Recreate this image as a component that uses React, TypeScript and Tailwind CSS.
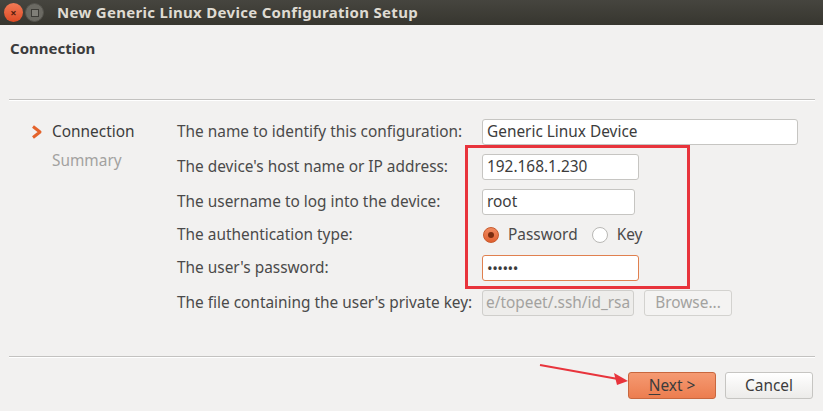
import { ReactNode } from "react";

function Field({ value, width, className = "" }: { value: string; width: string; className?: string }) {
  return (
    <div
      className={`h-[26px] ${width} flex items-center px-[4px] rounded-[3px] border bg-white text-[#3c3c3c] ${className}`}
    >
      {value}
    </div>
  );
}

function Row({ label, children, h = "h-[26px]" }: { label: string; children: ReactNode; h?: string }) {
  return (
    <>
      <div className={`${h} flex items-center`}>{label}</div>
      <div className={`${h} flex items-center`}>{children}</div>
    </>
  );
}

export default function App() {
  return (
    <div
      className="w-[823px] h-[411px] bg-[#f2f1f0] flex flex-col overflow-hidden text-[#4a4a4a] text-[15.4px]"
      style={{ fontFamily: '"Noto Sans", "DejaVu Sans", sans-serif' }}
    >
      {/* Title bar */}
      <div className="h-[25px] bg-gradient-to-b from-[#46453f] to-[#37362f] flex items-center shrink-0">
        <div className="ml-[4px] w-[19px] h-[19px] rounded-full bg-gradient-to-b from-[#f27a55] to-[#de4a23] flex items-center justify-center text-[#5a2010] text-[11px] font-bold leading-none">
          ×
        </div>
        <div className="ml-[2px] w-[19px] h-[19px] rounded-full bg-[#6b6a63] border border-[#55544e] flex items-center justify-center">
          <div className="w-[8px] h-[8px] border border-[#3d3c37] bg-[#807f78]" />
        </div>
        <div className="ml-[13px] text-[#dfdbd2] font-bold text-[15px] tracking-[0.3px]">
          New Generic Linux Device Configuration Setup
        </div>
      </div>

      {/* Header */}
      <div className="h-[74px] shrink-0 px-[10px] pt-[12px] font-bold text-[#3c3c3c] text-[15px]">Connection</div>
      <div className="mx-[9px] mr-[8px] border-t border-[#c3c2c0] border-b border-b-white" />

      {/* Body */}
      <div className="flex-1 flex pt-[18px]">
        <div className="w-[177px] shrink-0 pl-[31px]">
          <div className="flex items-center h-[26px]">
            <svg width="12" height="14" viewBox="0 0 12 14" className="mr-[9px]">
              <path d="M2 1.5 L9 7 L2 12.5" fill="none" stroke="#e4632b" strokeWidth="3" strokeLinejoin="round" />
            </svg>
            <span className="text-[#3c3c3c]">Connection</span>
          </div>
          <div className="pl-[21px] pt-[4px] text-[#a2a19f] leading-[24px]">Summary</div>
        </div>

        <div className="relative">
          <div className="grid grid-cols-[305px_auto] gap-y-[9px]">
            <Row label="The name to identify this configuration:">
              <Field value="Generic Linux Device" width="w-[316px]" className="border-[#c6c5c2]" />
            </Row>
            <Row label="The device's host name or IP address:">
              <Field value="192.168.1.230" width="w-[157px]" className="border-[#c6c5c2]" />
            </Row>
            <Row label="The username to log into the device:">
              <Field value="root" width="w-[153px]" className="border-[#c6c5c2]" />
            </Row>
            <Row label="The authentication type:" h="h-[22px]">
              <div className="flex items-center">
                <div className="ml-[1px] w-[16px] h-[16px] rounded-full bg-gradient-to-b from-[#f08a5f] to-[#e0602f] border border-[#c85a2c] flex items-center justify-center">
                  <div className="w-[6px] h-[6px] rounded-full bg-[#7a2d10]" />
                </div>
                <span className="ml-[9px]">Password</span>
                <div className="ml-[14px] w-[16px] h-[16px] rounded-full bg-white border border-[#b9b8b5]" />
                <span className="ml-[9px]">Key</span>
              </div>
            </Row>
            <Row label="The user's password:">
              <Field value="••••••" width="w-[157px]" className="border-[#e0804f] text-[15px] tracking-[-0.5px]" />
            </Row>
            <Row label="The file containing the user's private key:">
              <div className="flex items-center">
                <div className="h-[26px] w-[152px] flex items-center px-[3px] rounded-[3px] border border-[#cfcecb] bg-[#eeedeb] text-[#a3a29f] overflow-hidden whitespace-nowrap">
                  e/topeet/.ssh/id_rsa
                </div>
                <div className="ml-[10px] h-[26px] w-[88px] flex items-center justify-center rounded-[3px] border border-[#d3d2cf] bg-[#f4f3f2] text-[#a3a29f]">
                  Browse...
                </div>
              </div>
            </Row>
          </div>

          {/* Annotation box */}
          <div className="absolute left-[288px] top-[26px] w-[225px] h-[144px] border-[3px] border-[#e8343c]" />
        </div>
      </div>

      <div className="mx-[9px] mr-[8px] border-t border-[#c3c2c0] border-b border-b-white" />

      {/* Buttons */}
      <div className="relative h-[53px] shrink-0 flex items-start justify-end pr-[10px] pt-[14px] gap-[9px]">
        <svg className="absolute left-[538px] top-[4px]" width="95" height="26" viewBox="0 0 95 26">
          <line x1="2" y1="3" x2="80" y2="17" stroke="#e8343c" strokeWidth="2" />
          <path d="M90 19 L76 11 L79 23 Z" fill="#e8343c" />
        </svg>
        <div className="h-[27px] w-[88px] flex items-center justify-center rounded-[3px] border border-[#c8673e] bg-gradient-to-b from-[#f59a72] to-[#ec7d4f] text-[#3c3c3c]">
          <span className="underline underline-offset-[3px] decoration-[1px]">N</span>ext &gt;
        </div>
        <div className="h-[27px] w-[88px] flex items-center justify-center rounded-[3px] border border-[#c6c5c2] bg-gradient-to-b from-white to-[#ecebe9] text-[#3c3c3c]">
          Cancel
        </div>
      </div>
    </div>
  );
}
